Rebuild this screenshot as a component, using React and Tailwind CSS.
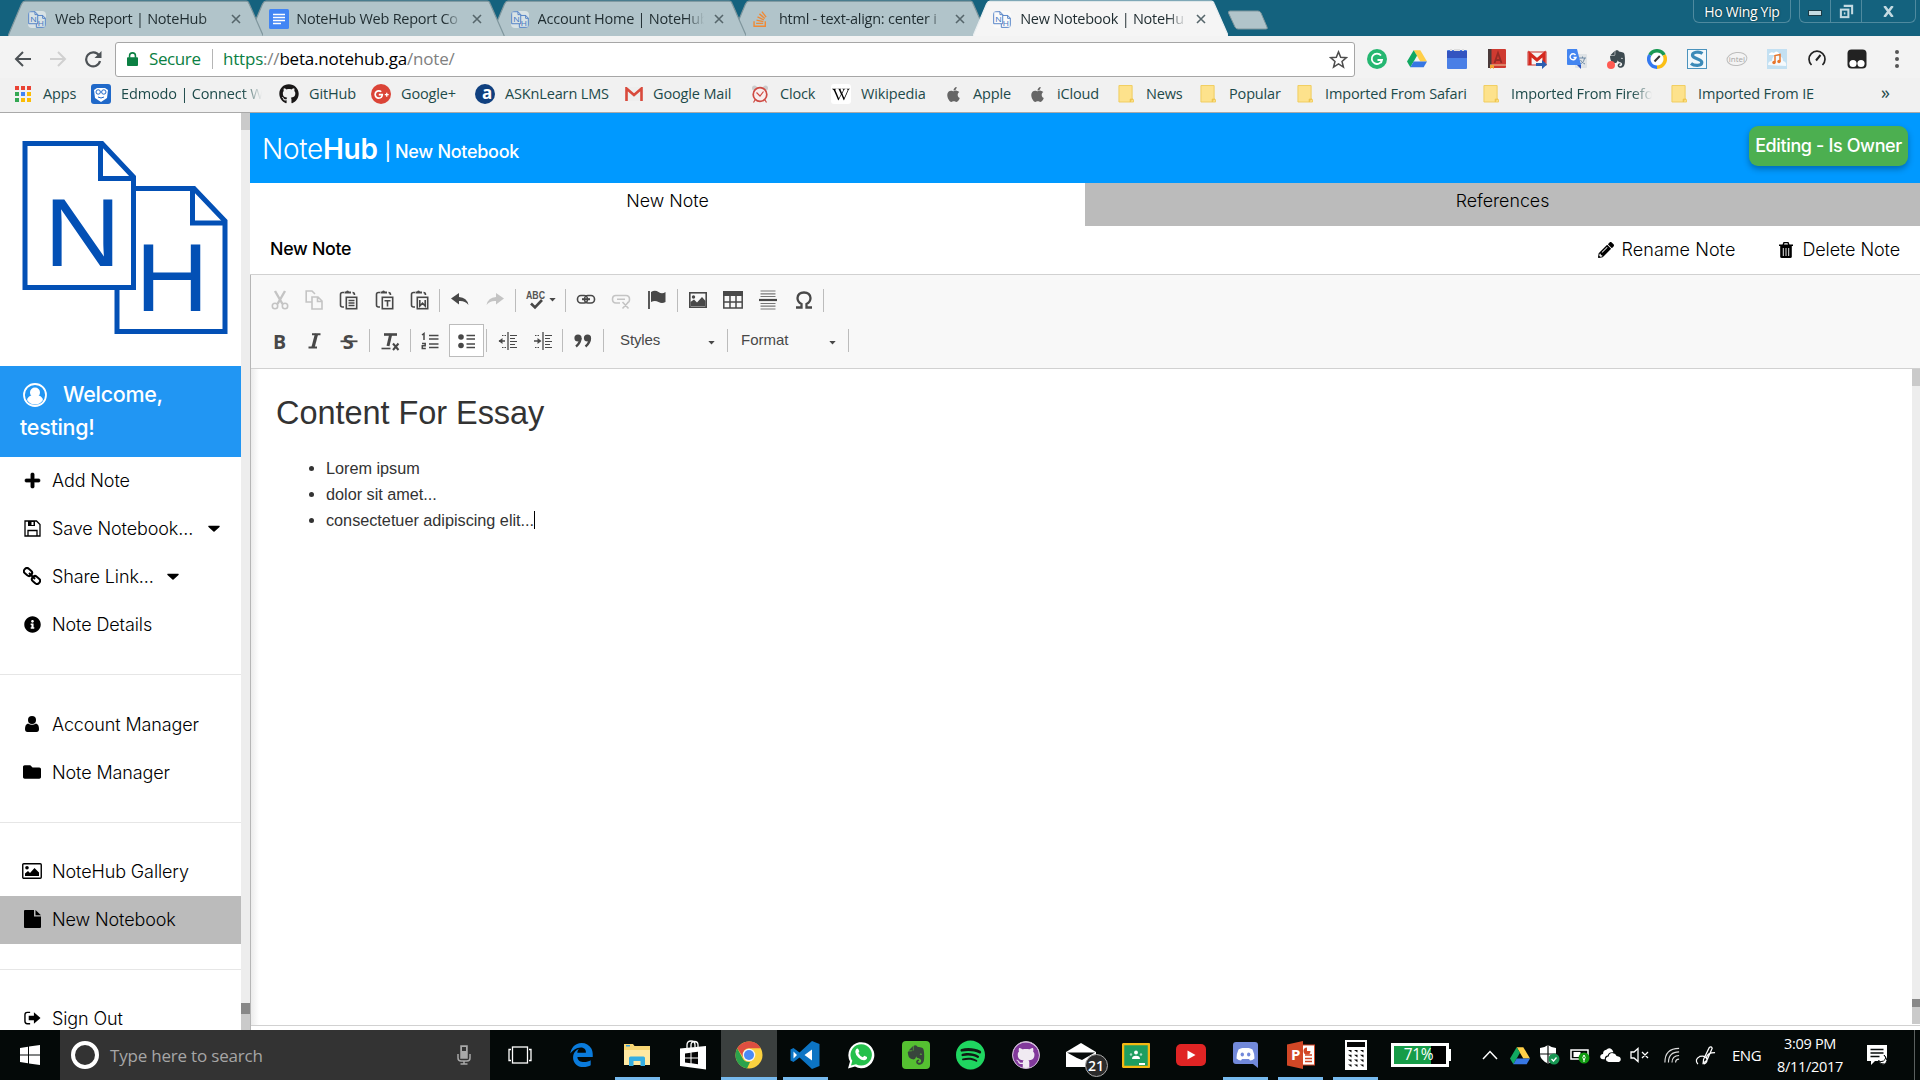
import React from "react";
import {
  FaApple, FaGithub, FaSpotify, FaEvernote, FaStackOverflow,
  FaPlus, FaInfoCircle, FaFolder,
  FaPencilAlt, FaCaretDown, FaEdgeLegacy, FaGooglePlusG, FaWikipediaW,
} from "react-icons/fa";

const UI = "font-['Open_Sans','Noto_Sans',sans-serif]";

/* ---------- shared drawings ---------- */

function NoteHubLogo({ className, sw = 5 }) {
  return (
    <svg viewBox="18 22 214 204" className={className} fill="none" stroke="currentColor" strokeWidth={sw}>
      <path d="M136 75.5H194L225 108V218.5H117V177" />
      <path d="M192.5 75.5V110H225" />
      <path d="M25 30.5H102L133.5 64V174.5H25Z" />
      <path d="M100.5 31V65.5H133" />
      <g fill="currentColor" stroke="none" fontFamily="Liberation Sans" fontSize="97">
        <text x="44" y="153" textLength="77" lengthAdjust="spacingAndGlyphs">N</text>
        <text x="135.5" y="197.5" textLength="73" lengthAdjust="spacingAndGlyphs">H</text>
      </g>
    </svg>
  );
}

function Drive({ className }) {
  return (
    <svg viewBox="0 0 24 22" className={className}>
      <path d="M8 1h8l8 13.5h-8z" fill="#ffcf48" />
      <path d="M8 1l4 6.8L4 21.5 0 14.5z" fill="#11a861" />
      <path d="M8 14.5h16L20 21.5H4z" fill="#3777e3" />
    </svg>
  );
}

function Docs() {
  return (
    <svg viewBox="0 0 20 20" className="h-5 w-5">
      <rect width="20" height="20" rx="1.5" fill="#4285f4" />
      <path d="M4 5.5h12M4 8.5h12M4 11.5h12M4 14.5h8" stroke="#fff" strokeWidth="1.5" />
    </svg>
  );
}

/* ---------- browser chrome ---------- */

function Tab({ icon, title, active }) {
  return (
    <div className={"relative -mr-[14px] h-9 w-[255.3px] shrink-0 " + (active ? "z-20" : "")}>
      <svg className="absolute inset-0 h-full w-full" viewBox="0 0 255 36" preserveAspectRatio="none">
        <path
          d="M0 36L13.5 4Q15 1.2 17 1.2H238Q240 1.2 241 4L255 36"
          fill={active ? "#f5f5f5" : "#b1c4ca"}
          stroke={active ? "#e9eef0" : "#7f969d"}
          strokeWidth="1.2"
        />
      </svg>
      <div className="relative flex h-full items-center pl-[20px] pt-[2px]">
        <span className="flex w-[27px] shrink-0">{icon}</span>
        <span className="w-[168px] whitespace-nowrap text-[14.5px] tracking-[-0.25px] text-[#1f2c30] [mask-image:linear-gradient(90deg,#000_88%,transparent_99%)]">
          {title}
        </span>
        <svg viewBox="0 0 10 10" className="ml-[8px] h-[10px] w-[10px]" stroke="#56666b" strokeWidth="1.6">
          <path d="M1 1L9 9M9 1L1 9" />
        </svg>
      </div>
    </div>
  );
}

function TabStrip() {
  const nh = <NoteHubLogo sw={11} className="h-[17px] w-[18px] rounded-sm bg-white/50 text-[#4a7cc4]" />;
  return (
    <div className="flex h-9 bg-[#14627e] pl-2">
      <div className="flex">
        <div className="relative z-[14]"><Tab icon={nh} title="Web Report | NoteHub" /></div>
        <div className="relative z-[13]"><Tab icon={<Docs />} title="NoteHub Web Report Co" /></div>
        <div className="relative z-[12]"><Tab icon={nh} title="Account Home | NoteHub" /></div>
        <div className="relative z-[11]"><Tab icon={<FaStackOverflow className="h-[18px] w-[16px] text-[#f08a35]" />} title="html - text-align: center i" /></div>
        <div className="relative z-20"><Tab active icon={nh} title="New Notebook | NoteHu" /></div>
      </div>
      <svg viewBox="0 0 42 20" className="ml-[13px] mt-[9.5px] h-5 w-[42px]">
        <path d="M3 1H31Q33 1 34 3L40 17Q41 19 39 19H11Q9 19 8 17L1.5 3Q1 1 3 1Z" fill="#b1c4ca" stroke="#7f969d" />
      </svg>
      <div className="ml-auto flex">
        <div className="mr-2 flex h-[23px] w-[98px] items-center justify-center rounded-b-md border border-t-0 border-[#4f8a9f] text-[14px] tracking-[-0.3px] text-white [text-shadow:0_0_2px_#022]">
          Ho Wing Yip
        </div>
        <div className="mr-[4px] flex h-[23px] w-[117px] rounded-b-md border border-t-0 border-[#4f8a9f]">
          <div className="flex w-[31px] items-center justify-center border-r border-[#4f8a9f]"><span className="mt-1 box-content h-1 w-[12px] border border-[#1b3b46] bg-[#c4dae1]" /></div>
          <div className="flex w-[31px] items-center justify-center border-r border-[#4f8a9f]">
            <svg viewBox="0 0 16 16" className="h-[15px] w-[15px]" fill="none" stroke="#c4dae1" strokeWidth="2.200"><path d="M5 2h9v9" /><rect x="2" y="6" width="8" height="8" /><path d="M5.200 10h1.600" /></svg>
          </div>
          <div className="flex flex-1 items-center justify-center">
            <svg viewBox="0 0 12 12" className="h-[11px] w-[11px]" stroke="#c4dae1" strokeWidth="2.800"><path d="M1.500 0L10.500 12M10.500 0L1.500 12" /></svg>
          </div>
        </div>
      </div>
    </div>
  );
}

const extensions = [
  <svg viewBox="0 0 20 20" className="h-5 w-5"><circle cx="10" cy="10" r="10" fill="#25b771" /><path d="M14 6.500A5.200 5.200 0 1 0 15 11H10.500M15 11l-1 3" fill="none" stroke="#fff" strokeWidth="1.8" /></svg>,
  <Drive className="h-[19px] w-5" />,
  <svg viewBox="0 0 20 20" className="h-5 w-5"><rect y="1" width="20" height="19" rx="1" fill="#4a7fe6" /><rect y="2" width="20" height="7" fill="#3354c0" /><path d="M3 1h2M15 1h2M7 1h6" stroke="#ddd" strokeWidth="2" /></svg>,
  <svg viewBox="0 0 20 20" className="h-5 w-5"><rect x="1" width="18" height="19" rx="1" fill="#cf3a30" /><rect x="1" width="3.500" height="19" fill="#4a3a3a" /><path d="M7.500 14L11 4l3.500 10M9 11h4" stroke="#962b25" strokeWidth="1.8" fill="none" /><path d="M3 16h16" stroke="#eecb9e" /><path d="M3 16v4l2-1.500L7 20v-4z" fill="#f3a32f" /></svg>,
  <svg viewBox="0 0 20 20" className="h-5 w-5"><rect x="1" y="3" width="18" height="13" fill="#f5f5f5" stroke="#c9302c" /><path d="M3 16V5l7 6 7-6v9" fill="none" stroke="#d5281e" strokeWidth="3.200" /><path d="M9 14h6v-3l5 4.500-5 4.500v-3H9z" fill="#2b5eb0" /></svg>,
  <svg viewBox="0 0 20 20" className="h-5 w-5"><rect x="8" y="5" width="12" height="14" rx="1" fill="#dfe3e6" /><path d="M12 9h7M15.500 7.500V9M13 15c3-1 4-3 4.500-6M13.500 11c1 2 2.500 3 4.500 4" fill="none" stroke="#6f8aa5" /><path d="M1 0h9l4 16H1Q0 16 0 15V1Q0 0 1 0z" fill="#4385f0" /><path d="M10 16l4 4v-4z" fill="#2b55c2" /><path d="M8.500 6A3 3 0 1 0 9 8.500H6.500" fill="none" stroke="#fff" strokeWidth="1.400" /></svg>,
  <span className="relative"><FaEvernote className="h-5 w-[17px] text-[#3d4a50]" /><span className="absolute bottom-0 left-[-2px] h-2 w-2 rounded-full bg-[#ff5a52]" /></span>,
  <svg viewBox="0 0 20 20" className="h-5 w-5" fill="none" strokeWidth="3.500"><path d="M2.800 6A8.200 8.200 0 0 1 17.200 6" stroke="#1a9a55" /><path d="M17.200 6A8.200 8.200 0 0 1 10 18.200" stroke="#fbbf15" /><path d="M10 18.200A8.200 8.200 0 0 1 2.800 6" stroke="#3479f0" /><circle cx="10" cy="10" r="6" fill="#fff" stroke="none" /><path d="M7.500 12.500L12.800 7" stroke="#333" strokeWidth="2" /></svg>,
  <svg viewBox="0 0 20 20" className="h-5 w-5"><rect x=".5" y=".5" width="19" height="19" fill="#f1f8fc" stroke="#4b93bd" /><path d="M15.500 4.500C12 2 5 3 5.500 6.500S15 9.500 14.800 13.500 7 17 4 14.500" fill="none" stroke="#3b8ab8" strokeWidth="3.200" /></svg>,
  <svg viewBox="0 0 22 16" className="h-4 w-[22px]"><ellipse cx="11" cy="8" rx="10" ry="6.500" fill="none" stroke="#bdbdbd" transform="rotate(-8 11 8)" /><text x="11" y="11" fontSize="8" textAnchor="middle" fill="#a5a5a5" fontFamily="Open Sans">intel</text></svg>,
  <svg viewBox="0 0 20 20" className="h-5 w-5"><rect width="20" height="20" fill="#c3e0f2" /><path d="M1 16q0-4 4-4 0-6 6-5 5 0 5 5 4 1 3 5z" fill="#f4f9fd" /><path d="M2 5q2-3 5-1 2-3 5 0v2H2z" fill="#fff" /><path d="M8 13.500V6.500l5-1v7" fill="none" stroke="#e8762c" strokeWidth="1.500" /><circle cx="7" cy="13.500" r="1.700" fill="#e8762c" /><circle cx="12" cy="12.500" r="1.700" fill="#e8762c" /></svg>,
  <svg viewBox="0 0 20 20" className="h-5 w-5" fill="none" stroke="#222" strokeWidth="1.700"><path d="M4.500 16A8 8 0 1 1 15.500 16" /><path d="M9 11.500L13.500 6" strokeWidth="2" /></svg>,
  <svg viewBox="0 0 20 20" className="h-5 w-5"><rect x=".5" y=".5" width="19" height="19" rx="4" fill="#222" /><circle cx="6" cy="14.500" r="3.600" fill="#fff" /><circle cx="14" cy="14.500" r="3.600" fill="#fff" /></svg>,
];

function AddressBar() {
  return (
    <div className="flex h-[42px] items-center bg-[#f3f3f3] pt-[4px]">
      <svg viewBox="0 0 18 16" className="ml-[14px] h-4 w-[18px]" fill="none" stroke="#4d5256" strokeWidth="2"><path d="M17 8H2M9 1L2 8l7 7" /></svg>
      <svg viewBox="0 0 18 16" className="ml-[17px] h-4 w-[18px]" fill="none" stroke="#d0d0d0" strokeWidth="2"><path d="M1 8h15M9 1l7 7-7 7" /></svg>
      <svg viewBox="0 0 18 18" className="ml-[17px] h-[18px] w-[18px]" fill="none" stroke="#4d5256" strokeWidth="2.200"><path d="M15 5.500A7 7 0 1 0 16 11" /><path d="M17.500 1v7h-7z" fill="#4d5256" stroke="none" /></svg>
      <div className="ml-[13px] flex h-[35px] w-[1240px] items-center rounded-[3px] border border-[#a6a6a6] bg-white text-[17px]">
        <svg viewBox="0 0 12 15" className="ml-[11px] h-[14px] w-[11px]"><rect y="5.500" width="12" height="9.500" rx="1" fill="#0b8043" /><path d="M2.800 6V4a3.200 3.200 0 0 1 6.400 0v2" fill="none" stroke="#0b8043" strokeWidth="1.700" /></svg>
        <span className="ml-[11px] w-[52px] tracking-[-0.4px] text-[#0b8043]">Secure</span>
        <span className="ml-[11px] h-5 w-px bg-[#b5b5b5]" />
        <span className="ml-[10px] whitespace-nowrap tracking-[-0.2px] text-[#808080]"><span className="text-[#0b8043]">https</span>://<span className="text-black">beta.notehub.ga</span>/note/</span>
        <svg viewBox="0 0 20 20" className="ml-auto mr-[6px] h-[19px] w-[19px]" fill="none" stroke="#4d4d4d" strokeWidth="1.600"><path d="M10 2l2.300 5.700 6 .4-4.600 3.900 1.500 6L10 14.700 4.800 18l1.500-6L1.700 8.100l6-.4z" /></svg>
      </div>
      <div className="ml-[2px] flex pb-px">
        {extensions.map((e, i) => <span key={i} className="flex w-10 items-center justify-center">{e}</span>)}
        <span className="flex w-10 flex-col items-center justify-center gap-[3px]"><i className="h-1 w-1 rounded-full bg-[#555]" /><i className="h-1 w-1 rounded-full bg-[#555]" /><i className="h-1 w-1 rounded-full bg-[#555]" /></span>
      </div>
    </div>
  );
}

const folder = (
  <svg viewBox="0 0 17 19" className="h-[18px] w-4"><path d="M1 .5h14v14l1.500 1v2.500H1z" fill="#fde28c" stroke="#f0cc5c" /><path d="M13 18v-3h3" fill="#f8d264" stroke="#eabf45" /></svg>
);
const appleIcon = <FaApple className="h-[17px] w-[13px] text-[#666]" />;

const bookmarks = [
  { w: "w-[76px]", g: "w-[28px]", t: "Apps", i: <svg viewBox="0 0 16 16" className="h-4 w-4">{["#ea4335", "#ea4335", "#ea4335", "#34a853", "#4285f4", "#fbbc05", "#34a853", "#fbbc05", "#fbbc05"].map((c, k) => <rect key={k} x={(k % 3) * 6} y={Math.floor(k / 3) * 6} width="4" height="4" fill={c} />)}</svg> },
  { w: "w-[188px]", g: "w-[30px]", t: "Edmodo | Connect W", fade: true, i: <svg viewBox="0 0 20 20" className="h-5 w-5"><rect width="20" height="20" rx="3" fill="#2069c9" /><path d="M3 6l3-2h8l3 2-1 8-6 4-6-4z" fill="#fff" /><circle cx="7.200" cy="8" r="2.200" fill="none" stroke="#2069c9" /><circle cx="12.800" cy="8" r="2.200" fill="none" stroke="#2069c9" /><path d="M7 13q3 2 6 0" fill="none" stroke="#2069c9" /></svg> },
  { w: "w-[92px]", g: "w-[30px]", t: "GitHub", i: <FaGithub className="h-5 w-5 text-[#191717]" /> },
  { w: "w-[104px]", g: "w-[30px]", t: "Google+", i: <span className="flex h-5 w-5 items-center justify-center rounded-full bg-[#db4437] text-white"><FaGooglePlusG className="h-[13px] w-[15px]" /></span> },
  { w: "w-[150px]", g: "w-[30px]", t: "ASKnLearn LMS", i: <span className="flex h-5 w-5 items-center justify-end rounded-full bg-[#10407f] pb-[3px] pr-[3px] text-[17px] font-bold text-white">a</span> },
  { w: "w-[126px]", g: "w-[28px]", t: "Google Mail", i: <svg viewBox="0 0 18 14" className="h-[14px] w-[18px]"><path d="M0 0h18v14H0z" fill="#eee" /><path d="M1.500 14V1.500L9 8l7.500-6.500V14" fill="none" stroke="#d94a3c" strokeWidth="2.600" /></svg> },
  { w: "w-[80px]", g: "w-[29px]", t: "Clock", i: <svg viewBox="0 0 18 18" className="h-[18px] w-[18px]" fill="none" stroke="#cf4a43" strokeWidth="1.700"><circle cx="3.500" cy="3" r="2.500" fill="#ccc" stroke="none" /><circle cx="14.500" cy="3" r="2.500" fill="#ccc" stroke="none" /><circle cx="9" cy="9.500" r="6.800" fill="#f8eeee" /><path d="M5.500 7.500L9 11l3.500-4.500M4 15l-1.500 2.500M14 15l1.500 2.500" strokeWidth="1.200" /></svg> },
  { w: "w-[116px]", g: "w-[30px]", t: "Wikipedia", i: <span className="flex h-5 w-5 items-center justify-center rounded-[3px] bg-white"><FaWikipediaW className="h-[15px] w-[18px] text-black" /></span> },
  { w: "w-[84px]", g: "w-[26px]", t: "Apple", i: appleIcon },
  { w: "w-[87px]", g: "w-[26px]", t: "iCloud", i: appleIcon },
  { w: "w-[82px]", g: "w-[28px]", t: "News", i: folder },
  { w: "w-[97px]", g: "w-[29px]", t: "Popular", i: folder },
  { w: "w-[186px]", g: "w-[28px]", t: "Imported From Safari", i: folder },
  { w: "w-[188px]", g: "w-[28px]", t: "Imported From Firefo", fade: true, i: folder },
  { w: "w-[210px]", g: "w-[27px]", t: "Imported From IE", i: folder },
];

function Bookmarks() {
  return (
    <div className="flex h-[35px] items-center overflow-hidden border-b border-[#a9a9a9] bg-[#f1f1f1] pb-[2px] pl-[15px] text-[14.5px] tracking-[-0.15px] text-[#1d4a4a]">
      {bookmarks.map((b) => (
        <div key={b.t} className={"flex shrink-0 items-center " + b.w}>
          <span className={"flex shrink-0 " + b.g}>{b.i}</span>
          <span className={"whitespace-nowrap " + (b.fade ? "w-[141px] [mask-image:linear-gradient(90deg,#000_86%,transparent)]" : "")}>{b.t}</span>
        </div>
      ))}
      <span className="pb-1 text-[18px]">»</span>
    </div>
  );
}

/* ---------- NoteHub sidebar ---------- */

const Chain = () => (
  <svg viewBox="0 0 18 18" className="h-[18px] w-[18px]" fill="none" stroke="#000" strokeWidth="2">
    <rect x="-4.300" y="-3" width="8.600" height="6" rx="2.800" transform="translate(5 5) rotate(40)" />
    <rect x="-4.300" y="-3" width="8.600" height="6" rx="2.800" transform="translate(13 13) rotate(40)" />
    <path d="M6 6l6 6" />
  </svg>
);

const Floppy = () => (
  <svg viewBox="0 0 17 17" className="h-[17px] w-[17px]" fill="none" stroke="#000" strokeWidth="1.300">
    <path d="M1 1h11.500L16 4.500V16H1z" />
    <path d="M4 16v-5.500h9V16" />
    <path d="M4 1h7v5H4z" fill="#000" stroke="none" />
    <path d="M7.500 2h2v3h-2z" fill="#fff" stroke="none" />
  </svg>
);

const Person = () => (
  <svg viewBox="0 0 14 16" className="h-4 w-[14px]"><circle cx="7" cy="4" r="4" /><path d="M3 7.500q4 2.500 8 0 3 .8 3 5.500 0 3-2.500 3h-9Q0 16 0 13q0-4.700 3-5.500z" /></svg>
);

const FileIcon = () => (
  <svg viewBox="0 0 17 18" className="h-[18px] w-[17px]"><path d="M0 1q0-1 1-1h9v6.500h7V17q0 1-1 1H1q-1 0-1-1z" /><path d="M11.500 0L17 5.200h-5.500z" /></svg>
);

const SignOut = () => (
  <svg viewBox="0 0 18 14" className="h-[14px] w-[17px]"><path d="M6.500 1H3.500Q1 1 1 3.500v7Q1 13 3.500 13h3" fill="none" stroke="#000" strokeWidth="1.500" /><path d="M5 4.500h5.500V1L17.500 7l-7 6V9.500H5z" /></svg>
);

const Gallery = () => (
  <svg viewBox="0 0 20 16" className="h-4 w-5"><rect x=".75" y=".75" width="18.500" height="14.500" rx="1" fill="none" stroke="#000" strokeWidth="1.400" /><circle cx="5" cy="4.800" r="1.800" /><path d="M3 13v-2.500L6 8l2 2 4.500-5L17 9.500V13z" /></svg>
);

function Item({ icon, label, caret, active }) {
  return (
    <div className={"flex h-12 items-center pb-[2px] text-[18px] font-[350] tracking-[-0.12px] text-black " + (active ? "bg-[#bbbbbb]" : "")}>
      <span className="ml-[20px] mr-[8px] flex w-6 items-center justify-center">{icon}</span>
      <span className="whitespace-nowrap">{label}</span>
      {caret && <FaCaretDown className={"h-[18px] w-3 scale-x-110 " + caret} />}
    </div>
  );
}

function Sidebar() {
  return (
    <div className="flex w-[250px] shrink-0 overflow-hidden">
      <div className="h-[917px] w-[241px] overflow-hidden bg-white">
        <div className="flex h-[253px] pl-[18px] pt-[22px]">
          <NoteHubLogo className="h-[204px] w-[214px] text-[#0350b5]" />
        </div>
        <div className="h-[91px] bg-[#2196f3] pl-5 pt-[12px] text-[21.5px] font-medium leading-[33px] tracking-[-0.3px] text-white">
          <div className="flex items-center">
            <svg viewBox="0 0 24 24" className="ml-[3px] mr-4 h-6 w-6"><circle cx="12" cy="12" r="11" fill="none" stroke="#fff" strokeWidth="1.800" /><circle cx="12" cy="9.500" r="5" fill="#fff" /><path d="M4 17q1-4 4.500-4.500h7Q19 13 20 17q-3 4.500-8 4.500T4 17z" fill="#fff" /></svg>
            Welcome,
          </div>
          <div>testing!</div>
        </div>
        <Item icon={<FaPlus className="h-[17px] w-[17px] [stroke:black] [stroke-width:20]" />} label="Add Note" />
        <Item icon={<Floppy />} label="Save Notebook..." caret="ml-[15px]" />
        <Item icon={<Chain />} label="Share Link..." caret="ml-[13px]" />
        <Item icon={<FaInfoCircle className="h-[17px] w-[17px]" />} label="Note Details" />
        <div className="mb-[26px] mt-[25px] h-px bg-[#e6e6e6]" />
        <Item icon={<Person />} label="Account Manager" />
        <Item icon={<FaFolder className="h-[18px] w-[18px]" />} label="Note Manager" />
        <div className="my-[25px] h-px bg-[#e6e6e6]" />
        <Item icon={<Gallery />} label="NoteHub Gallery" />
        <Item icon={<FileIcon />} label="New Notebook" active />
        <div className="my-[25px] h-px bg-[#e6e6e6]" />
        <Item icon={<SignOut />} label="Sign Out" />
      </div>
      <div className="flex w-[9px] shrink-0 flex-col bg-[#ededed]">
        <div className="h-[17px] bg-[#cacaca]" />
        <div className="mt-auto h-[11px] bg-[#888]" />
        <div className="h-[16px] bg-[#cacaca]" />
      </div>
    </div>
  );
}

/* ---------- editor ---------- */

const Sep = () => <span className="h-[23px] w-px shrink-0 bg-[#bcbcbc]" />;

function Ico({ w, children, dim }) {
  return (
    <span className={"flex h-8 shrink-0 items-center justify-center " + w}>
      <svg viewBox="0 0 20 20" className="h-5 w-5 overflow-visible" fill="none" stroke={dim ? "#c4c4c4" : "#484848"} strokeWidth="1.600">{children}</svg>
    </span>
  );
}

const clip = (
  <>
    <path d="M5 2.500H3.500Q1.500 2.500 1.500 4.500V15q0 2 2 2H5M13.500 2.500q2 0 2 2.500" />
    <path d="M5.500 3.500V1.500H7Q8.500-.5 10 1.500h2v2z" fill="#484848" stroke="none" />
    <rect x="7.300" y="7.300" width="10.400" height="11.400" />
  </>
);

const Caret = ({ m }) => <svg viewBox="0 0 8 5" className={"h-[4px] w-[7px] " + m}><path d="M0 0h8L4 4.500z" fill="#484848" /></svg>;

function Toolbar() {
  return (
    <div className="h-[94px] shrink-0 border-b border-[#d1d1d1] bg-[#f8f8f8] font-['Liberation_Sans',Arial,sans-serif]">
      <div className="flex h-[42px] items-center pl-[11px] pt-[8px]">
        <Ico w="w-[35px]" dim><path d="M5 1l7.500 13M15 1L7.500 14" strokeWidth="2.400" /><circle cx="5" cy="16" r="2.700" /><circle cx="15" cy="16" r="2.700" /></Ico>
        <Ico w="w-[33px]" dim><path d="M8 12H2.200V1H8l3 3" /><path d="M8 7h6l4 4v8H8zM13.500 7v4.500H18" /></Ico>
        <Ico w="w-[37px]">{clip}<path d="M9.500 10.500h6M9.500 13h6M9.500 15.500h6" /></Ico>
        <Ico w="w-[35px]">{clip}<path d="M9.500 10.800h6M12.500 10.500v6" /></Ico>
        <Ico w="w-[36px]">{clip}<path d="M9.800 10v6l2.700-2.800 2.700 2.800v-6" /></Ico>
        <span className="ml-[1px] flex"><Sep /></span>
        <Ico w="w-[40px]"><path d="M1 8.500L9 3v4q8 .5 9.500 8Q15 10.500 9 11v3.500z" fill="#484848" stroke="none" /></Ico>
        <Ico w="w-[29px]" dim><path d="M19 8.500L11 3v4q-8 .5-9.500 8Q5 10.500 11 11v3.500z" fill="#c4c4c4" stroke="none" /></Ico>
        <span className="ml-[6px] flex"><Sep /></span>
        <Ico w="ml-[10px] w-[20px]"><text x="0" y="9" fontSize="10.500" fontWeight="bold" textLength="19" lengthAdjust="spacingAndGlyphs" fill="#555" stroke="none" fontFamily="Liberation Sans">ABC</text><path d="M5 13.500l4 4 7-7.500" strokeWidth="2.600" /></Ico>
        <Caret m="ml-[3px]" />
        <span className="ml-[9px] flex"><Sep /></span>
        <Ico w="w-[40px]"><rect x="1.500" y="5.500" width="10" height="7.500" rx="3.500" /><rect x="8.500" y="5.500" width="10" height="7.500" rx="3.500" /><path d="M6 9.200h8" strokeWidth="2" /></Ico>
        <Ico w="w-[30px]" dim><path d="M9 13H5Q1.500 13 1.500 9.200T5 5.500h10q3.500 0 3.500 3.700T16 12.500M6 9.200h8M11.500 12l6 6.500M17.500 12l-6 6.500" /></Ico>
        <Ico w="w-[41px]"><path d="M2 1v18" strokeWidth="1.800" /><path d="M4 2q4-2.500 7.500 0t7 0v10q-3.500 2-7 0T4 12z" fill="#484848" stroke="none" /></Ico>
        <Sep />
        <Ico w="w-[39px]"><rect x="1.800" y="2.800" width="16.400" height="14.400" /><circle cx="5.500" cy="7" r="1.700" fill="#484848" stroke="none" /><path d="M2.500 16v-4L6 9.500l3 3 5-5.500 3.500 4v5z" fill="#484848" stroke="none" /></Ico>
        <Ico w="w-[32px]"><rect x="0" y="1" width="20" height="5" fill="#484848" stroke="none" /><path d="M.8 2v16h18.400V2M1 12h18M7 6v12M13 6v12" strokeWidth="1.500" /></Ico>
        <Ico w="w-[37px]"><path d="M2.500 1h15M2.500 3.800h15M2.500 6.500h15M2.500 13.500h15M2.500 16.200h15M2.500 19h15" stroke="#777" strokeWidth="1.200" /><path d="M1 10h18" strokeWidth="2.200" /></Ico>
        <Ico w="w-[35px]"><path d="M2 17.500h5.500V14Q3.500 12 3.500 8 4 2.500 10 2.500t6.500 5.500q0 4-4 6v3.500H18" strokeWidth="2.300" /></Ico>
        <span className="ml-[2px] flex"><Sep /></span>
      </div>
      <div className="flex h-[42px] items-center pl-[11px] pt-[5px]">
        <Ico w="w-[35px]"><text x="3" y="17.500" fontSize="19.500" fontWeight="bold" fill="#484848" stroke="none" fontFamily="Open Sans">B</text></Ico>
        <Ico w="w-[35px]"><path d="M7 3.200h8.500M3.500 16.500H12" strokeWidth="2" /><path d="M11.500 3L8 16.500" strokeWidth="3.200" /></Ico>
        <Ico w="w-[34px]"><text x="3.800" y="17.500" fontSize="20" fontWeight="bold" fill="#484848" stroke="none" fontFamily="Open Sans">S</text><path d="M1.500 10.300h17" strokeWidth="1.800" /></Ico>
        <span className="ml-[3px] flex"><Sep /></span>
        <Ico w="w-[40px]"><path d="M4 3.500h13" strokeWidth="2.600" /><path d="M10.800 3L8 15" strokeWidth="3" /><path d="M1.500 17.500h9" strokeWidth="1.600" /><path d="M13 12.500l5.500 6.500M18.500 12.500L13 19" strokeWidth="2" /></Ico>
        <Sep />
        <Ico w="w-[38px]"><path d="M9 4.500h9.500M9 8h9.500M9 13h9.500M9 16.500h9.500" strokeWidth="1.300" /><path d="M2 4l2-1.500V9M2 12.500h3.200v2.200H2.300v2.800h3.500" strokeWidth="1.500" /></Ico>
        <span className="flex h-[33px] w-[35px] shrink-0 items-center justify-center border border-[#bcbcbc] bg-white">
          <svg viewBox="0 0 20 20" className="h-5 w-5"><circle cx="4" cy="6" r="2.800" fill="#484848" /><circle cx="4" cy="14.500" r="2.800" fill="#484848" /><path d="M9.500 4.500H18M9.500 8H18M9.500 13H18M9.500 16.500H18" stroke="#484848" strokeWidth="1.300" /></svg>
        </span>
        <span className="ml-[2px] flex"><Sep /></span>
        <Ico w="ml-[3px] w-[35px]"><path d="M10 1v18" strokeWidth="1.300" /><path d="M12 4.500h7M12 7.500h5M12 10.500h7M12 13.500h5M12 16.500h7" strokeWidth="1.200" /><path d="M1 10h6" strokeWidth="1.500" /><path d="M.500 10l4-3v6z" fill="#484848" stroke="none" /><path d="M4 4.500h5M4 16.500h5" strokeDasharray="1.500 1" strokeWidth="1.200" /></Ico>
        <Ico w="w-[35px]"><path d="M10 1v18" strokeWidth="1.300" /><path d="M12 4.500h7M12 7.500h5M12 10.500h7M12 13.500h5M12 16.500h7" strokeWidth="1.200" /><path d="M1 10h6" strokeWidth="1.500" /><path d="M8.500 10l-4-3v6z" fill="#484848" stroke="none" /><path d="M2 4.500h5M2 16.500h5" strokeDasharray="1.500 1" strokeWidth="1.200" /></Ico>
        <span className="ml-[2px] flex"><Sep /></span>
        <Ico w="w-[40px]"><circle cx="5" cy="7" r="3.600" fill="#484848" stroke="none" /><circle cx="14.500" cy="7" r="3.600" fill="#484848" stroke="none" /><path d="M7.400 7q0 5-4.400 8.500M16.900 7q0 5-4.400 8.500" strokeWidth="2.400" /></Ico>
        <Sep />
        <span className="ml-[16px] w-[88px] text-[15px] tracking-[-0.1px] text-[#484848]">Styles</span>
        <Caret m="mt-1" /><span className="ml-[12px] flex"><Sep /></span>
        <span className="ml-[13px] w-[88px] text-[15px] text-[#484848]">Format</span>
        <Caret m="mt-1" /><span className="ml-[12px] flex"><Sep /></span>
      </div>
    </div>
  );
}

function Main() {
  return (
    <div className="flex min-w-0 flex-1 flex-col bg-white">
      <div className="flex h-[70px] shrink-0 items-center bg-[#0099ff] pl-[12px] pr-3 pt-px text-white">
        <span className="text-[28px] font-light tracking-[-0.3px]">Note<span className="font-semibold">Hub</span></span>
        <span className="ml-[7px] pt-[6px] text-[18px] font-medium tracking-[-0.3px]">| New Notebook</span>
        <span className="mb-[6px] ml-auto flex h-10 w-[159px] items-start justify-center rounded-[9px] bg-[#4caf50] pt-[6px] text-[18px] font-medium leading-[27px] tracking-[-0.38px] shadow-[0_3px_6px_rgba(0,0,0,0.3)]">Editing - Is Owner</span>
      </div>
      <div className="flex h-[43px] shrink-0 text-center text-[17.8px] font-[350] leading-[36px] text-black">
        <div className="w-1/2">New Note</div>
        <div className="w-1/2 bg-[#bbbbbb]">References</div>
      </div>
      <div className="flex h-[49px] shrink-0 items-center border-b border-[#d1d1d1] pb-[1px] pl-5 pr-5 text-[18px] font-[350] text-black">
        <span className="text-[17.8px] font-medium tracking-[-0.3px]">New Note</span>
        <FaPencilAlt className="ml-auto mr-[8px] h-4 w-4" />
        <span className="mr-[44px] tracking-[0.05px]">Rename Note</span>
        <svg viewBox="0 0 14 16" className="mr-[9px] h-4 w-[14px]"><path d="M0 2.500h14V4H0zM4.500 0h5l1 2.500h-1.500L8.500 1.300h-3L5 2.500H3.500z" /><path d="M1.200 4h11.600v10.500Q12.800 16 11.300 16H2.700Q1.200 16 1.200 14.500z" /><path d="M4.300 6v8M7 6v8M9.700 6v8" stroke="#fff" strokeWidth=".9" /></svg>
        <span className="tracking-[-0.1px]">Delete Note</span>
      </div>
      <div className="flex min-h-0 flex-1 flex-col border-l border-[#b6b6b6]">
        <Toolbar />
        <div className="flex h-[657px] shrink-0 border-b border-[#d1d1d1] bg-[linear-gradient(90deg,#ececec,#fff_8px)] font-['Liberation_Sans',Arial,sans-serif] text-[#333]">
          <div className="flex-1 pl-[25px] pt-[24px]">
            <h1 className="text-[32.5px] leading-[40px] tracking-[-0.05px]">Content For Essay</h1>
            <ul className="ml-[50px] mt-[22px] text-[16.25px] leading-[26px] tracking-[-0.02px]">
              {["Lorem ipsum", "dolor sit amet...", "consectetuer adipiscing elit..."].map((t, i) => (
                <li key={t} className="flex items-center">
                  <span className="-ml-[17px] mr-[12px] h-[5px] w-[5px] rounded-full bg-[#333]" />
                  {t}
                  {i === 2 && <span className="h-[18px] w-px bg-black" />}
                </li>
              ))}
            </ul>
          </div>
          <div className="flex h-[655px] w-2 flex-col bg-[#ededed]">
            <div className="h-[17px] bg-[#cacaca]" />
            <div className="mt-auto h-[8px] bg-[#888]" />
            <div className="h-[17px] bg-[#cacaca]" />
          </div>
        </div>
      </div>
    </div>
  );
}

/* ---------- taskbar ---------- */

function TaskButton({ w = "w-[55px]", run, active, children }) {
  return (
    <div className={"flex h-full shrink-0 flex-col items-center " + w + (active ? " bg-[#3b403f]" : "")}>
      <div className="flex h-[47px] items-center pt-[3px]">{children}</div>
      {run && <div className={"h-[3px] bg-[#76b9ed] " + (active ? "w-full" : "w-[45px]")} />}
    </div>
  );
}

function Tray({ w = "w-[30px]", children }) {
  return <span className={"flex shrink-0 items-center justify-center " + w}>{children}</span>;
}

function Taskbar() {
  return (
    <div className="flex h-[50px] items-center overflow-hidden bg-[#040908] text-white">
      <div className="flex w-[60px] justify-center"><svg viewBox="0 0 20 20" className="h-5 w-5" fill="#fff"><path d="M0 3l8-1.200V9.500H0zM9 1.600L20 0v9.500H9zM0 10.500h8v7.700L0 17zM9 10.500h11V20L9 18.400z" /></svg></div>
      <div className="flex h-full w-[430px] items-center bg-[#333]">
        <span className="ml-[11px] h-7 w-7 rounded-full border-4 border-white" />
        <span className="ml-[11px] pt-px text-[17px] tracking-[-0.2px] text-[#a6a6a6]">Type here to search</span>
        <svg viewBox="0 0 14 20" className="ml-auto mr-[19px] h-5 w-[14px]" fill="none" stroke="#a8a8a8" strokeWidth="1.500"><rect x="4" y="1" width="6" height="12" fill="#a8a8a8" /><rect x="5" y="2" width="4" height="4" fill="#333" stroke="none" /><path d="M1 9v4q0 3 3 3h6q3 0 3-3V9M7 16v3M3.500 19h7" /></svg>
      </div>
      <div className="flex w-[63px] justify-center pr-[3px]"><svg viewBox="0 0 24 18" className="h-[18px] w-6" fill="none" stroke="#fff" strokeWidth="1.300"><rect x="4.500" y="1" width="15" height="16" /><path d="M3 3.500H1v11h2M21 3.500h2v11h-2" /></svg></div>
      <TaskButton w="w-[56px]"><FaEdgeLegacy className="h-[26px] w-[25px] text-[#0a7bdc]" /></TaskButton>
      <TaskButton w="w-[56px]" run><svg viewBox="0 0 28 24" className="h-6 w-7"><path d="M1 1h9l1.500 2H27v19H1z" fill="#f8d674" /><path d="M3 2h4v1.500H3z" fill="#3aa0dc" /><path d="M1 7h26v15H1z" fill="#ffe9a2" /><path d="M6 23v-8q0-1.500 1.500-1.500h13q1.500 0 1.500 1.500v8h-4.500v-5h-7v5z" fill="#35aee2" /></svg></TaskButton>
      <TaskButton w="w-[56px]"><svg viewBox="0 0 28 30" className="h-[30px] w-7"><path d="M1 8.500l26-2.500v23.500L1 26z" fill="#fff" /><path d="M8 8V5q0-4 4-4t4 4v2M12 8V5q0-3.500 3.500-3.500T19 5v2" fill="none" stroke="#fff" strokeWidth="1.300" /><path d="M6 13.500l5.500-.7v4.700H6zM12.500 12.600l6.500-.9v5.800h-6.500zM6 18.500h5.500v4.700L6 22.500zM12.500 18.500H19v5.700l-6.500-.9z" fill="#050505" /></svg></TaskButton>
      <TaskButton w="w-[56px]" run active>
        <svg viewBox="0 0 28 28" className="h-7 w-7"><circle cx="14" cy="14" r="13.500" fill="#fbd13f" /><path d="M2.300 7.300L8 18q2 3.500 7 3L12 27.400A13.500 13.500 0 0 1 2.300 7.300z" fill="#2ba24c" /><path d="M2.300 7.300Q6 1 14 .5t11.700 6.800H14q-4 0-5.700 4L8 16z" fill="#de4f41" /><circle cx="14" cy="14" r="6.300" fill="#f4f4f4" /><circle cx="14" cy="14" r="5" fill="#4a8af4" /></svg>
      </TaskButton>
      <TaskButton w="w-[56px]" run><svg viewBox="0 0 30 28" className="h-7 w-[30px]"><path d="M22 0l7.500 3v22L22 28 9.500 16.500 3.500 21 .5 19.500v-11L3.500 7l6 4.500z" fill="#0c74c4" /><path d="M22 8.500v11L14.500 14zM3.500 10.500v7L7 14z" fill="#fff" /></svg></TaskButton>
      <TaskButton w="w-[56px]"><svg viewBox="0 0 28 28" className="h-7 w-7"><path d="M1 27.500l2-7A13 13 0 1 1 8 25.500z" fill="#fff" /><path d="M4 24.500l1.300-4.700A10.700 10.700 0 1 1 9 23.200z" fill="#25c04c" /><path d="M9 8.500q1.500-2 2.500 0l.8 2-1 1.600q1.500 3 4.500 4.200l1.500-1.600 2.700 1.300q.5 2.500-2.500 3.300-3 .3-6-2.500T8.300 11q0-1.500.7-2.500z" fill="#fff" /></svg></TaskButton>
      <TaskButton w="w-[54px]"><span className="flex h-7 w-7 items-center justify-center rounded-sm bg-[#55c031]"><FaEvernote className="h-[22px] w-5 text-[#38453c]" /></span></TaskButton>
      <TaskButton><span className="flex h-[29px] w-[29px] items-center justify-center rounded-full bg-[#101a14]"><FaSpotify className="h-[30px] w-[30px] text-[#1fd660]" /></span></TaskButton>
      <TaskButton><span className="flex h-7 w-7 items-center justify-center overflow-hidden rounded-full border border-[#cdb6d5] bg-[#f0eaf2]"><FaGithub className="h-[27px] w-[27px] text-[#82399b]" /></span></TaskButton>
      <TaskButton><span className="relative flex"><svg viewBox="0 0 30 24" className="h-6 w-[30px]"><path d="M0 9L15 0l15 9v15H0z" fill="#fff" /><path d="M1 9.500h28L16 17l-5-2z" fill="#060a0a" /></svg><span className="absolute left-[19px] top-[11px] flex h-[23px] w-[23px] items-center justify-center rounded-full border border-[#aaa] bg-[#2b2b2b] text-[14px] font-semibold">21</span></span></TaskButton>
      <TaskButton><svg viewBox="0 0 28 25" className="h-[25px] w-7"><rect x="1" y="1" width="26" height="23" rx="1" fill="#1e9e60" stroke="#f4b813" strokeWidth="2.500" /><circle cx="14" cy="9.500" r="1.900" fill="#fff" /><path d="M10 16q0-3.200 4-3.200t4 3.200z" fill="#fff" /><circle cx="9" cy="11.500" r="1.200" fill="#a6dac2" /><circle cx="19" cy="11.500" r="1.200" fill="#a6dac2" /><path d="M17 21h6" stroke="#fff" strokeWidth="2" /></svg></TaskButton>
      <TaskButton><svg viewBox="0 0 30 22" className="h-[22px] w-[30px]"><rect width="30" height="22" rx="5" fill="#e02424" /><path d="M11.500 6.500l8 4.500-8 4.500z" fill="#fff" /></svg></TaskButton>
      <TaskButton run><svg viewBox="0 0 25 26" className="h-[26px] w-[25px]"><path d="M3 0h19q3 0 3 3v23l-5-4H3q-3 0-3-3V3q0-3 3-3z" fill="#7289da" /><path d="M5.500 7.500q3-2 4.500-1.500h5q1.500-.5 4.500 1.500 2 4 2 9-2 2-4.500 2L16 17H9l-1 1.500q-2.500 0-4.500-2 0-5 2-9z" fill="#fff" /><ellipse cx="9.300" cy="12.500" rx="1.700" ry="1.900" fill="#7289da" /><ellipse cx="15.700" cy="12.500" rx="1.700" ry="1.900" fill="#7289da" /></svg></TaskButton>
      <TaskButton run><svg viewBox="0 0 28 28" className="h-7 w-7"><rect x="12" y="4" width="15.500" height="20" fill="#fff" stroke="#d24726" /><path d="M18 14h7M18 17.500h7M18 20.500h7" stroke="#d24726" strokeWidth="1.500" /><path d="M20 6.500a3.500 3.500 0 1 0 3.500 3.500H20z" fill="#d24726" /><path d="M0 3.500L16 0v28L0 24.500z" fill="#d24726" /><text x="4" y="19" fontSize="15" fontWeight="bold" fill="#fff" fontFamily="Open Sans">P</text></svg></TaskButton>
      <TaskButton run><svg viewBox="0 0 22 30" className="h-[30px] w-[22px]"><rect width="22" height="30" fill="#fff" /><rect x="2" y="2" width="18" height="5" fill="#070707" />{[0, 1, 2, 3, 4, 5, 6, 7, 8, 9, 10, 11].map((k) => <path key={k} transform={`translate(${3 + (k % 3) * 6} ${10 + Math.floor(k / 3) * 4.8})`} d="M0 0h3.500v2.600z" fill="#070707" />)}</svg></TaskButton>

      <div className="ml-[8px] flex items-center">
        <div className="relative flex h-[24px] w-[58px] items-center justify-center border-[3px] border-white bg-[linear-gradient(90deg,#169c48_71%,#000_71%)] pr-[3px] text-[15.5px] tracking-[-0.4px]">71%</div>
        <div className="h-3 w-[2px] bg-white" />
      </div>
      <div className="ml-[24px] flex h-full items-center">
        <Tray><svg viewBox="0 0 16 10" className="h-[10px] w-4" fill="none" stroke="#fff" strokeWidth="1.500"><path d="M1 9l7-7.500L15 9" /></svg></Tray>
        <Tray><Drive className="h-[19px] w-5" /></Tray>
        <Tray><svg viewBox="0 0 20 20" className="h-5 w-5"><path d="M0 3q4 0 8-3 4 3 8 3v6q0 6-8 9.500Q0 15 0 9z" fill="#fff" /><path d="M8 0v18M0 9h16" stroke="#0a0f0e" strokeWidth="1.200" /><circle cx="14" cy="14" r="5.500" fill="#179552" /><path d="M11.500 14l2 2 3-3.500" fill="none" stroke="#fff" strokeWidth="1.300" /></svg></Tray>
        <Tray><svg viewBox="0 0 20 18" className="h-[18px] w-5"><rect x="1" y="4" width="17" height="9" fill="none" stroke="#fff" strokeWidth="1.500" /><rect x="3.500" y="6" width="7" height="5" fill="#fff" /><circle cx="14" cy="12" r="5.500" fill="#109a10" /><path d="M14 9q2.500 2.500 0 5-2.500-2.500 0-5zM14 13v3" fill="none" stroke="#fff" /></svg></Tray>
        <Tray><svg viewBox="0 0 22 15" className="h-[14px] w-[21px]" fill="#fff"><path d="M5 12H3Q0 12 0 9.500 0 7 3 6.500 3 2.500 6.500 2 9-1 12.500 1.500 14 3 14 4.500 9 4 8 8q-3.500.5-3 4z" /><path d="M9 15q-3-.5-3-3t3-3q1-4 4.500-3.500 3 0 4 3Q22 9 22 12t-3.500 3z" /></svg></Tray>
        <Tray><svg viewBox="0 0 20 16" className="h-4 w-5" fill="none" stroke="#fff" strokeWidth="1.300"><path d="M1 5v6h3l4 3.500V1.500L4 5zM12 5l6 6M18 5l-6 6" /></svg></Tray>
        <Tray w="w-[33px]"><svg viewBox="0 0 18 18" className="h-[17px] w-4" fill="none" stroke="#ddd" strokeWidth="1.300"><path d="M1 17Q1 1 17 1M5 17Q5 5 17 5M9 17Q9 9 17 9M13 17q0-4 4-4" /></svg></Tray>
        <Tray w="w-[34px]"><svg viewBox="0 0 22 22" className="h-[21px] w-[21px]" fill="none" stroke="#fff" strokeWidth="1.300"><path d="M9 15L15 2.500q2-1.500 3 1L12.500 16l-4 3zM3 20q-4-5 2-8 6-1.500 7.500 3M9 20q5-2 3-7 1-5 9-5" /></svg></Tray>
        <span className="ml-[10px] w-[30px] text-[15px] tracking-[-0.5px]">ENG</span>
        <div className="ml-[13px] w-[70px] pb-px text-center text-[14.5px] leading-[23px] tracking-[-0.3px]"><div>3:09 PM</div><div>8/11/2017</div></div>
        <svg viewBox="0 0 22 21" className="ml-[22px] h-[21px] w-[22px]"><path d="M0 0h20v16H8l-4 4v-4H0z" fill="#fff" /><path d="M3.500 4.500h13M3.500 8h13M3.500 11.500h9" stroke="#080d0c" strokeWidth="1.300" /><path d="M17 10q3.500 3-.5 6-3 1.500-5-.5 2 4.500 6 3.500 5-2.500-.5-9z" fill="#fff" stroke="#080d0c" /></svg>
      </div>
      <span className="ml-auto mr-[5px] h-full w-px bg-[#5a5f5e]" />
    </div>
  );
}

export default function App() {
  return (
    <div className={"flex h-[1080px] w-[1920px] flex-col overflow-hidden " + UI}>
      <TabStrip />
      <AddressBar />
      <Bookmarks />
      <div className="flex h-[917px] shrink-0 overflow-hidden font-['Inter',sans-serif]">
        <Sidebar />
        <Main />
      </div>
      <Taskbar />
    </div>
  );
}
